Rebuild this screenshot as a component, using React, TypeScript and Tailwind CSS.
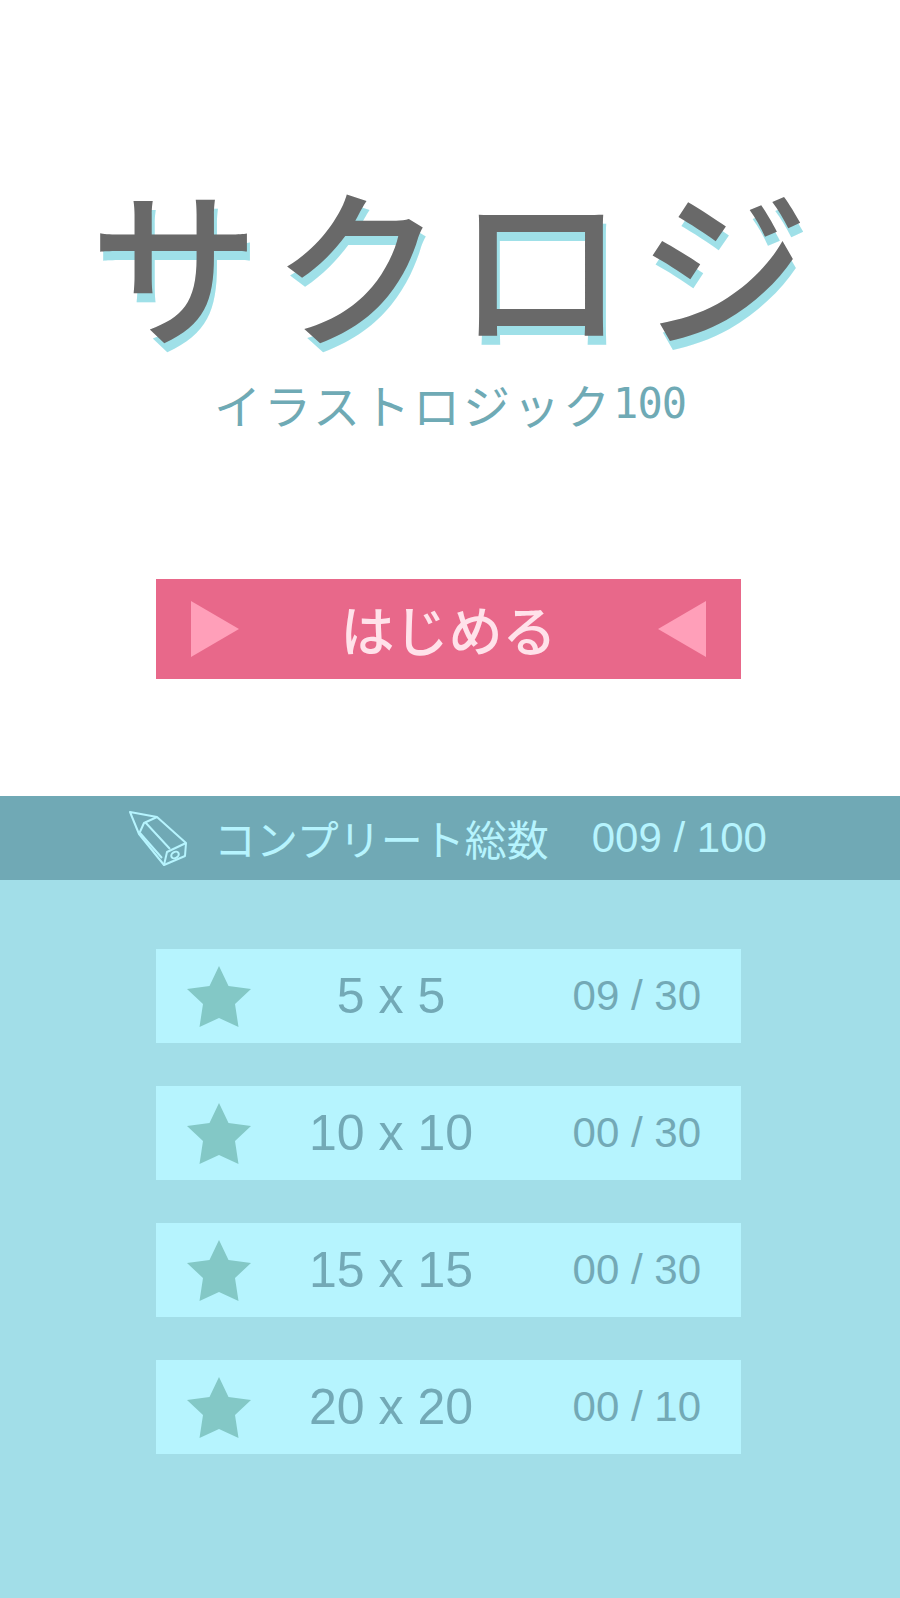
import React from 'react';

const JP = "font-['Noto_Sans_CJK_JP','Liberation_Sans',sans-serif]";

const Star = () => (
  <svg width="64" height="61" viewBox="0 0 64 61" className="block">
    <path d="M32 0 L41.5 20 L64 23 L48 38 L51.5 61 L32 52 L12.5 61 L16 38 L0 23 L22.5 20 Z" fill="#83c8c6" />
  </svg>
);

const Pencil = () => (
  <svg width="62" height="60" viewBox="15 12 62 60" fill="none" stroke="#b6f4fe" strokeWidth="2" strokeLinejoin="round" className="block">
    <path d="M18 16 L45 21 L74 47 L73 60 L52 69 L27 38 Z" />
    <path d="M27 38 L32 27 L45 21" />
    <path d="M33 26 L58 53 M28 37 L50 62" />
    <path d="M52 69 L55 56 L74 47" />
    <ellipse cx="63" cy="59" rx="4" ry="3" transform="rotate(-30 63 59)" />
  </svg>
);

const rows = [
  { size: '5 x 5', count: '09 / 30' },
  { size: '10 x 10', count: '00 / 30' },
  { size: '15 x 15', count: '00 / 30' },
  { size: '20 x 20', count: '00 / 10' },
];

export default function App() {
  return (
    <div className="w-[900px] h-[1598px] flex flex-col bg-white overflow-hidden">
      <div className="h-[796px] shrink-0 flex flex-col items-center pr-[3px]">
        <h1 className={`${JP} mt-[160px] ml-[14px] h-[200px] text-[170px] leading-[200px] tracking-[13px] font-medium text-[#696969] whitespace-nowrap [text-shadow:3px_9px_0_#9fe0e8]`}>
          サクロジ
        </h1>
        <div className={`${JP} mt-[16px] h-[56px] ml-[3px] flex items-center text-[47px] leading-[56px] tracking-[3px] text-[#6faab5] whitespace-nowrap`}>
          イラストロジック<span className="font-['DejaVu_Sans_Mono',monospace] text-[42px] tracking-[-1px]">100</span>
        </div>
        <button className="mt-[147px] w-[585px] h-[100px] bg-[#e8688a] flex items-center justify-between px-[35px]">
          <svg width="48" height="56" viewBox="0 0 48 56"><path d="M0 0 L48 28 L0 56 Z" fill="#ff9fb9" /></svg>
          <span className={`${JP} text-[54px] leading-none font-medium text-[#ffe2ea]`}>はじめる</span>
          <svg width="48" height="56" viewBox="0 0 48 56"><path d="M48 0 L0 28 L48 56 Z" fill="#ff9fb9" /></svg>
        </button>
      </div>

      <div className="h-[84px] shrink-0 bg-[#70a9b5] flex items-center pl-[127px] text-[#b6f4fe]">
        <Pencil />
        <span className={`${JP} ml-[25px] text-[42px] leading-none whitespace-nowrap`}>コンプリート総数</span>
        <span className="font-['Liberation_Sans',sans-serif] ml-[43px] text-[42px] leading-none whitespace-nowrap">009 / 100</span>
      </div>

      <div className="flex-1 bg-[#a2dee8] flex flex-col items-center gap-[43px] pt-[69px] pr-[3px]">
        {rows.map((row) => (
          <div key={row.size} className="w-[585px] h-[94px] bg-[#b6f4fe] flex items-center font-['Liberation_Sans',sans-serif] text-[#73a9b6]">
            <div className="w-[127px] pl-[31px]"><Star /></div>
            <div className="w-[216px] text-center text-[50px] leading-none whitespace-nowrap">{row.size}</div>
            <div className="flex-1 pr-[40px] text-right text-[42px] leading-none whitespace-nowrap">{row.count}</div>
          </div>
        ))}
      </div>
    </div>
  );
}
